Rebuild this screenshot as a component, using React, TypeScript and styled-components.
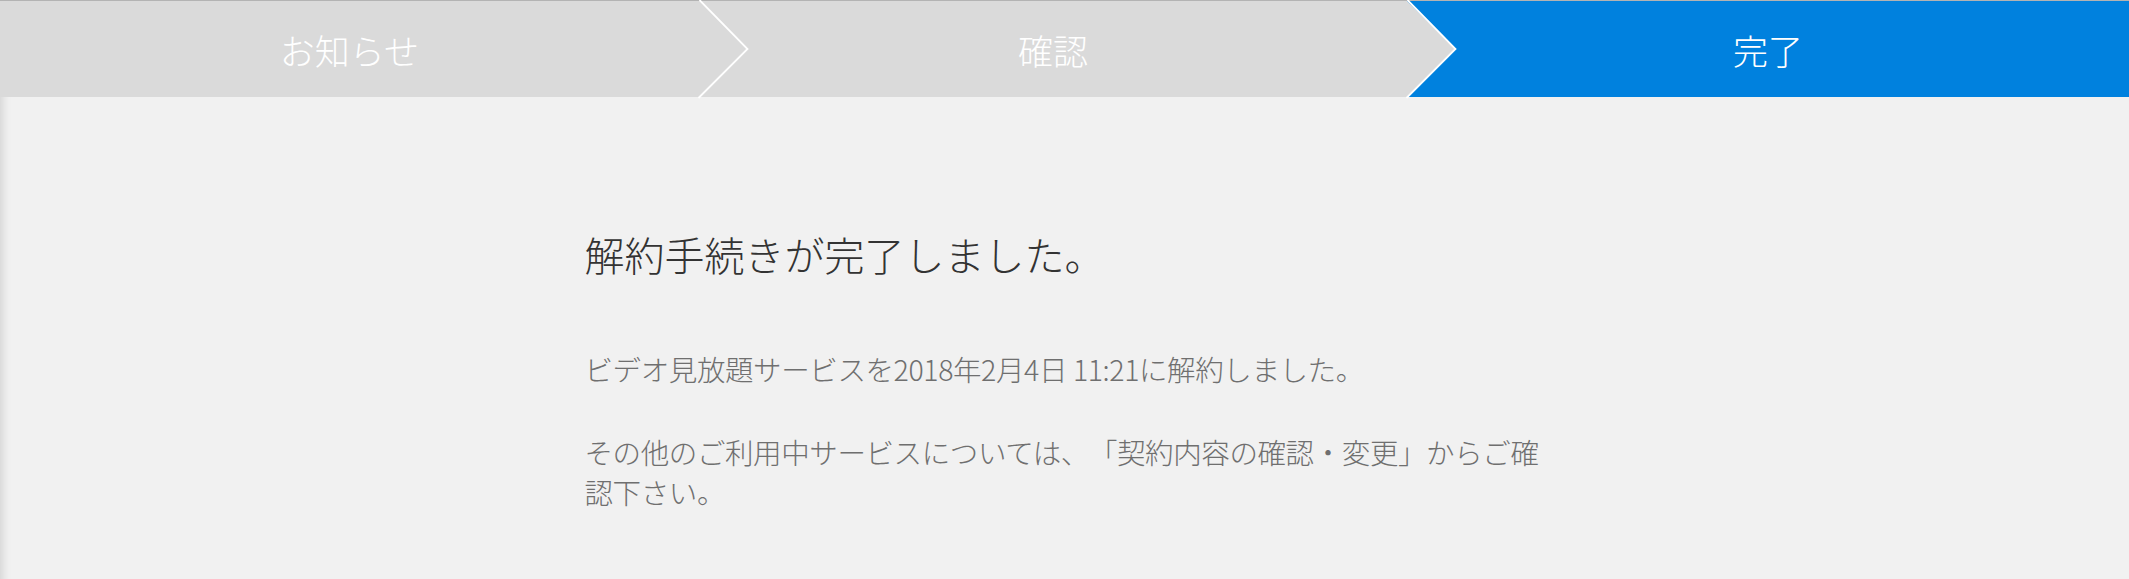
import React from 'react';
import styled, { createGlobalStyle } from 'styled-components';

const GlobalStyle = createGlobalStyle`
  html,
  body {
    margin: 0;
    padding: 0;
    background: #f1f1f1;
  }

  body {
    font-family: 'Noto Sans CJK JP', 'Noto Sans', sans-serif;
    font-weight: 300;
    text-spacing-trim: space-all;
  }
`;

interface Step {
  label: string;
  basis: string;
}

const steps: Step[] = [
  { label: 'お知らせ', basis: '32.83%' },
  { label: '確認', basis: '33.26%' },
  { label: '完了', basis: 'auto' },
];

const currentStep = 2;

const App = () => {
  return (
    <>
      <GlobalStyle />
      <Page>
        <StepBar>
          {steps.map((step, i) => (
            <StepItem key={step.label} $active={i === currentStep} $basis={step.basis}>
              {step.label}
              {i < steps.length - 1 && (
                <Arrow viewBox="0 0 50 96" preserveAspectRatio="none">
                  <polygon points="0,0 48.5,48 0,96" fill="#dadada" />
                  <polyline
                    points="0.5,-1 48.5,48 -0.5,97"
                    fill="none"
                    stroke="#ffffff"
                    strokeWidth="1.8"
                  />
                </Arrow>
              )}
            </StepItem>
          ))}
        </StepBar>

        <Content>
          <Title>解約手続きが完了しました。</Title>
          <Message>ビデオ見放題サービスを2018年2月4日 11:21に解約しました。</Message>
          <Message>
            その他のご利用中サービスについては、「契約内容の確認・変更」からご確認下さい。
          </Message>
        </Content>
      </Page>
    </>
  );
};

export default App;

const Page = styled.div`
  min-height: 100vh;
  background: #f1f1f1;
  box-shadow: inset 12px 0 10px -10px rgba(0, 0, 0, 0.14);
  border-top: 1px solid #b3b3b3;
  box-sizing: border-box;
`;

const StepBar = styled.ol`
  display: flex;
  margin: 0;
  padding: 0;
  list-style: none;
  height: 96px;
`;

const StepItem = styled.li<{ $active: boolean; $basis: string }>`
  position: relative;
  flex: ${({ $basis }) => ($basis === 'auto' ? '1 1 auto' : `0 0 ${$basis}`)};
  display: flex;
  align-items: center;
  justify-content: center;
  background: ${({ $active }) => ($active ? '#0081de' : '#dadada')};
  color: #ffffff;
  font-size: 35px;
  font-weight: 300;
`;

const Arrow = styled.svg`
  position: absolute;
  top: 0;
  left: 100%;
  width: 50px;
  height: 96px;
  z-index: 1;
  overflow: visible;
`;

const Content = styled.main`
  width: 960px;
  margin: 0 auto;
  padding: 127px 0 40px;
`;

const Title = styled.h1`
  margin: 0 0 65px;
  font-size: 40px;
  line-height: 60px;
  font-weight: 300;
  color: #333333;
`;

const Message = styled.p`
  margin: 0 0 43px;
  font-size: 28.5px;
  line-height: 40px;
  font-weight: 300;
  letter-spacing: -0.4px;
  color: #6f6f6f;
`;
